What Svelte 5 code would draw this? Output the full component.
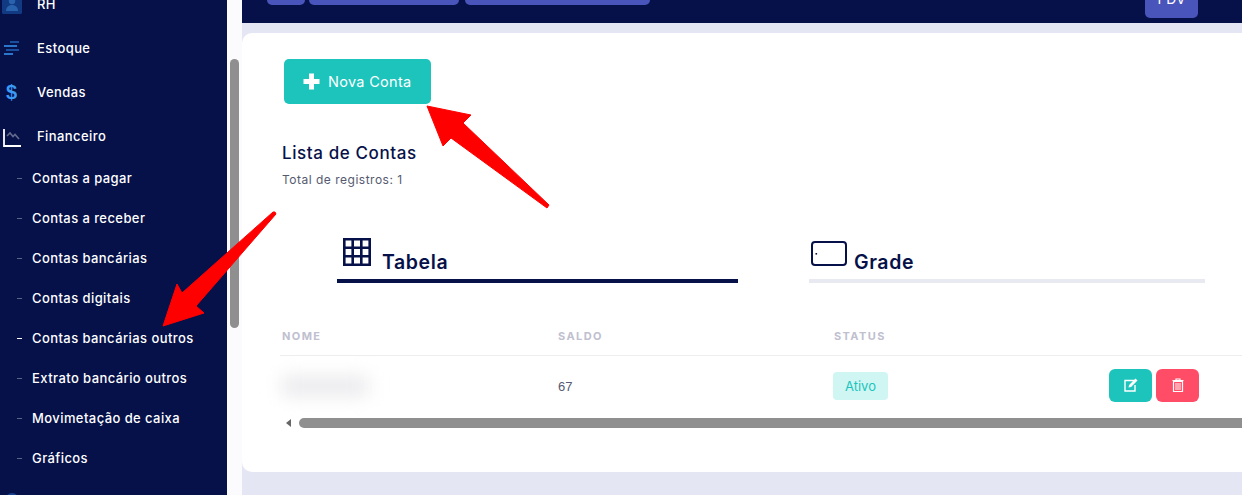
<script>
  const subItems = [
    { label: 'Contas a pagar' },
    { label: 'Contas a receber' },
    { label: 'Contas bancárias' },
    { label: 'Contas digitais' },
    { label: 'Contas bancárias outros', active: true },
    { label: 'Extrato bancário outros' },
    { label: 'Movimetação de caixa' },
    { label: 'Gráficos' }
  ];
</script>

<div class="page">
  <nav class="sidebar">
    <div class="item first">
      <span class="ico">
        <svg width="20" height="20" viewBox="0 0 20 20" aria-hidden="true">
          <rect x="0" y="0" width="20" height="20" rx="1.5" fill="#123a82"/>
          <circle cx="10" cy="7" r="3.2" fill="#2a63ad"/>
          <path d="M4 17c0-4 3-6 6-6s6 2 6 6z" fill="#2a63ad"/>
        </svg>
      </span>
      <span>RH</span>
    </div>
    <div class="item">
      <span class="ico shift">
        <svg width="18" height="16" viewBox="0 0 18 16" aria-hidden="true">
          <path d="M8 2h9" stroke="#1f5fb5" stroke-width="1.6"/>
          <path d="M2 6h13" stroke="#3391ee" stroke-width="1.6"/>
          <path d="M4 10h13" stroke="#1f5fb5" stroke-width="1.6"/>
          <path d="M2 14h9" stroke="#3391ee" stroke-width="1.6"/>
        </svg>
      </span>
      <span>Estoque</span>
    </div>
    <div class="item">
      <span class="ico dollar">$</span>
      <span>Vendas</span>
    </div>
    <div class="item">
      <span class="ico chart">
        <svg width="18" height="18" viewBox="0 0 18 18" aria-hidden="true">
          <path d="M1 0v17h17" fill="none" stroke="#fff" stroke-width="1.8"/>
          <path d="M4 7l3-3 3 3.500 2-2 4 4.500" fill="none" stroke="#626a8c" stroke-width="1.6"/>
        </svg>
      </span>
      <span>Financeiro</span>
    </div>
    {#each subItems as sub}
      <div class="sub" class:active={sub.active}>
        <span class="dash"></span>
        <span>{sub.label}</span>
      </div>
    {/each}
    <div class="item">
      <span class="ico">
        <svg width="20" height="20" viewBox="0 0 20 20" aria-hidden="true">
          <circle cx="10" cy="10" r="7" fill="#17408f"/>
        </svg>
      </span>
    </div>
  </nav>

  <div class="rail"><div class="thumb"></div></div>

  <main class="main">
    <header class="topbar">
      <div class="topbtn" style="width: 38px"></div>
      <div class="topbtn" style="width: 150px"></div>
      <div class="topbtn gap" style="width: 185px"></div>
      <div class="topbtn pdv">PDV</div>
    </header>

    <section class="card">
      <button class="new">
        <svg width="17" height="17" viewBox="0 0 17 17" aria-hidden="true">
          <path d="M8.500 0.500v16M0.500 8.500h16" stroke="#fff" stroke-width="5"/>
        </svg>
        Nova Conta
      </button>

      <h2>Lista de Contas</h2>
      <p class="total">Total de registros: 1</p>

      <div class="tabs">
        <div class="tab on">
          <svg width="28" height="28" viewBox="0 0 28 28" aria-hidden="true">
            <path d="M1.300 1.300h25.400v25.400H1.300zM1.300 9.700h25.400M1.300 18.300h25.400M9.700 1.300v25.400M18.300 1.300v25.400" fill="none" stroke="#061149" stroke-width="2.600"/>
          </svg>
          <span>Tabela</span>
        </div>
        <div class="tab">
          <svg width="36" height="25" viewBox="0 0 36 25" aria-hidden="true">
            <rect x="1" y="1" width="34" height="23" rx="3" fill="none" stroke="#061149" stroke-width="2"/>
            <rect x="4.500" y="12" width="1.600" height="1.600" fill="#061149"/>
          </svg>
          <span>Grade</span>
        </div>
      </div>

      <div class="table">
        <div class="row head">
          <span>NOME</span>
          <span>SALDO</span>
          <span>STATUS</span>
          <span></span>
        </div>
        <div class="row body">
          <span class="blur"></span>
          <span class="num">67</span>
          <span class="stat"><span class="badge">Ativo</span></span>
          <span class="actions">
            <button class="act edit" aria-label="Editar">
              <svg width="14" height="14" viewBox="0 0 14 14" aria-hidden="true">
                <path d="M10 2.500H1v10.500h10V7" fill="none" stroke="#fff" stroke-width="1.400"/>
                <path d="M4.500 9.500l.6-2.600L11.500.6l2 2-6.400 6.300z" fill="#fff"/>
              </svg>
            </button>
            <button class="act del" aria-label="Excluir">
              <svg width="12" height="14" viewBox="0 0 12 14" aria-hidden="true">
                <path d="M0.500 2.500h11M4 2.500V1h4v1.500" fill="none" stroke="#fff" stroke-width="1.200"/>
                <path d="M1.500 3.500h9V13.500h-9z" fill="none" stroke="#fff" stroke-width="1.200"/>
                <path d="M4 5v7M6 5v7M8 5v7" stroke="#fff" stroke-width="1"/>
              </svg>
            </button>
          </span>
        </div>
      </div>

      <div class="hscroll">
        <span class="left"></span>
        <span class="bar"></span>
      </div>
    </section>
  </main>

  <svg class="arrows" width="1242" height="495" viewBox="0 0 1242 495" aria-hidden="true">
    <path d="M427 106L471 115L463 123L549 205L547 208L451 138L443 146Z" fill="#ff0000" stroke="#ff0000" stroke-linejoin="round"/>
    <path d="M275 212L276 214L196 306L204 313L163 326L177 284L182 293L273 212Z" fill="#ff0000" stroke="#ff0000" stroke-linejoin="round"/>
  </svg>
</div>

<style>
  :global(body) {
    margin: 0;
    overflow: hidden;
  }

  .page {
    position: relative;
    display: flex;
    width: 1242px;
    height: 495px;
    overflow: hidden;
    background: #fbfbfd;
    font-family: Inter, "Noto Sans", sans-serif;
  }

  .sidebar {
    flex: 0 0 227px;
    height: 495px;
    overflow: hidden;
    background: #061149;
    color: #fff;
    font-size: 13px;
    font-weight: 500;
    letter-spacing: 0.42px;
  }

  .item {
    display: flex;
    align-items: center;
    height: 44px;
  }

  .item.first {
    margin-top: -18px;
  }

  .ico {
    display: flex;
    justify-content: center;
    align-items: center;
    width: 23px;
    margin-right: 14px;
  }

  .ico.shift {
    transform: translateX(-1px);
  }

  .ico.chart svg {
    margin-top: 3px;
  }

  .dollar {
    color: #3a9bf5;
    font-family: "Liberation Sans", sans-serif;
    font-size: 20px;
    font-weight: 700;
    letter-spacing: 0;
  }

  .sub {
    display: flex;
    align-items: center;
    height: 40px;
    padding-left: 17px;
  }

  .dash {
    width: 5px;
    height: 1px;
    margin-right: 10px;
    background: #5c6488;
  }

  .sub.active .dash {
    background: #fff;
  }

  .rail {
    flex: 0 0 15px;
    padding: 59px 3px 0;
    box-sizing: border-box;
  }

  .thumb {
    width: 9px;
    height: 269px;
    border-radius: 5px;
    background: #8f8f8f;
  }

  .main {
    flex: 1;
    min-width: 0;
    background: #e4e6f3;
  }

  .topbar {
    display: flex;
    height: 23px;
    padding-left: 25px;
    gap: 4px;
    background: #061149;
  }

  .topbtn {
    height: 30px;
    margin-top: -25px;
    border-radius: 5px;
    background: #4a55bb;
  }

  .topbtn.gap {
    margin-left: 2px;
  }

  .topbtn.pdv {
    width: 53px;
    height: 40px;
    margin-top: -22px;
    margin-left: 491px;
    display: flex;
    align-items: center;
    justify-content: center;
    color: #fff;
    font-size: 14px;
  }

  .card {
    width: 1100px;
    height: 439px;
    margin-top: 10px;
    padding: 26px 0 0 40px;
    box-sizing: border-box;
    border-radius: 10px;
    background: #fff;
    color: #061149;
  }

  .new {
    display: flex;
    align-items: center;
    gap: 8px;
    width: 147px;
    height: 45px;
    margin-left: 2px;
    padding: 0 0 0 19px;
    border: 0;
    border-radius: 5px;
    background: #1cc4bc;
    color: #fff;
    font: 400 14.5px Inter, "Noto Sans", sans-serif;
    letter-spacing: 0.3px;
  }

  h2 {
    margin: 38px 0 0;
    font-size: 17px;
    line-height: 22px;
    font-weight: 500;
    letter-spacing: 0.6px;
  }

  .total {
    margin: 8px 0 0;
    font-size: 12px;
    line-height: 16px;
    letter-spacing: 0.5px;
    color: #555a70;
  }

  .tabs {
    display: flex;
    gap: 71px;
    margin: 49px 0 0 55px;
  }

  .tab {
    display: flex;
    align-items: flex-end;
    gap: 11px;
    width: 401px;
    height: 46px;
    padding-left: 6px;
    box-sizing: border-box;
    border-bottom: 4px solid #e9e9f1;
    font-size: 19.5px;
    font-weight: 600;
    letter-spacing: 0.6px;
  }

  .tab:last-child {
    width: 396px;
    gap: 7px;
    padding-left: 2px;
  }

  .tab.on {
    border-bottom-color: #061149;
  }

  .tab svg {
    margin-bottom: 13px;
  }

  .tab span {
    margin-bottom: 5px;
    line-height: 24px;
  }

  .table {
    margin: 34px 0 0 -2px;
  }

  .row {
    display: grid;
    grid-template-columns: 276px 276px 275px 1fr;
    align-items: center;
  }

  .row.head {
    height: 38px;
    border-bottom: 1px solid #eeeeee;
    padding-left: 2px;
    font-size: 11px;
    font-weight: 700;
    letter-spacing: 1.4px;
    color: #c0c0cf;
  }

  .row.body {
    height: 60px;
    font-size: 13px;
    color: #555a70;
  }

  .blur {
    width: 86px;
    height: 20px;
    margin-left: 2px;
    background: #eaeaed;
    filter: blur(9px);
  }

  .num {
    margin-left: 2px;
    font-family: "Liberation Sans", sans-serif;
    font-size: 13px;
  }

  .stat {
    margin-left: 1px;
  }

  .badge {
    display: inline-block;
    padding: 0 12px;
    line-height: 28px;
    border-radius: 4px;
    background: #cff6f3;
    color: #1cc4bc;
  }

  .actions {
    display: flex;
    gap: 4px;
    margin-left: 2px;
    margin-bottom: 2px;
  }

  .act {
    display: flex;
    align-items: center;
    justify-content: center;
    width: 43px;
    height: 33px;
    padding: 0;
    border: 0;
    border-radius: 6px;
  }

  .edit {
    background: #1cc4bc;
  }

  .del {
    background: #ff4d67;
  }

  .hscroll {
    display: flex;
    align-items: center;
    gap: 8px;
    height: 10px;
    margin: 2px 0 0 4px;
  }

  .left {
    width: 0;
    height: 0;
    border: 4px solid transparent;
    border-left-width: 0;
    border-right: 5px solid #666;
  }

  .bar {
    flex: 1;
    height: 10px;
    border-radius: 5px;
    background: #8f8f8f;
  }

  .arrows {
    position: absolute;
    top: 0;
    left: 0;
    pointer-events: none;
  }
</style>
